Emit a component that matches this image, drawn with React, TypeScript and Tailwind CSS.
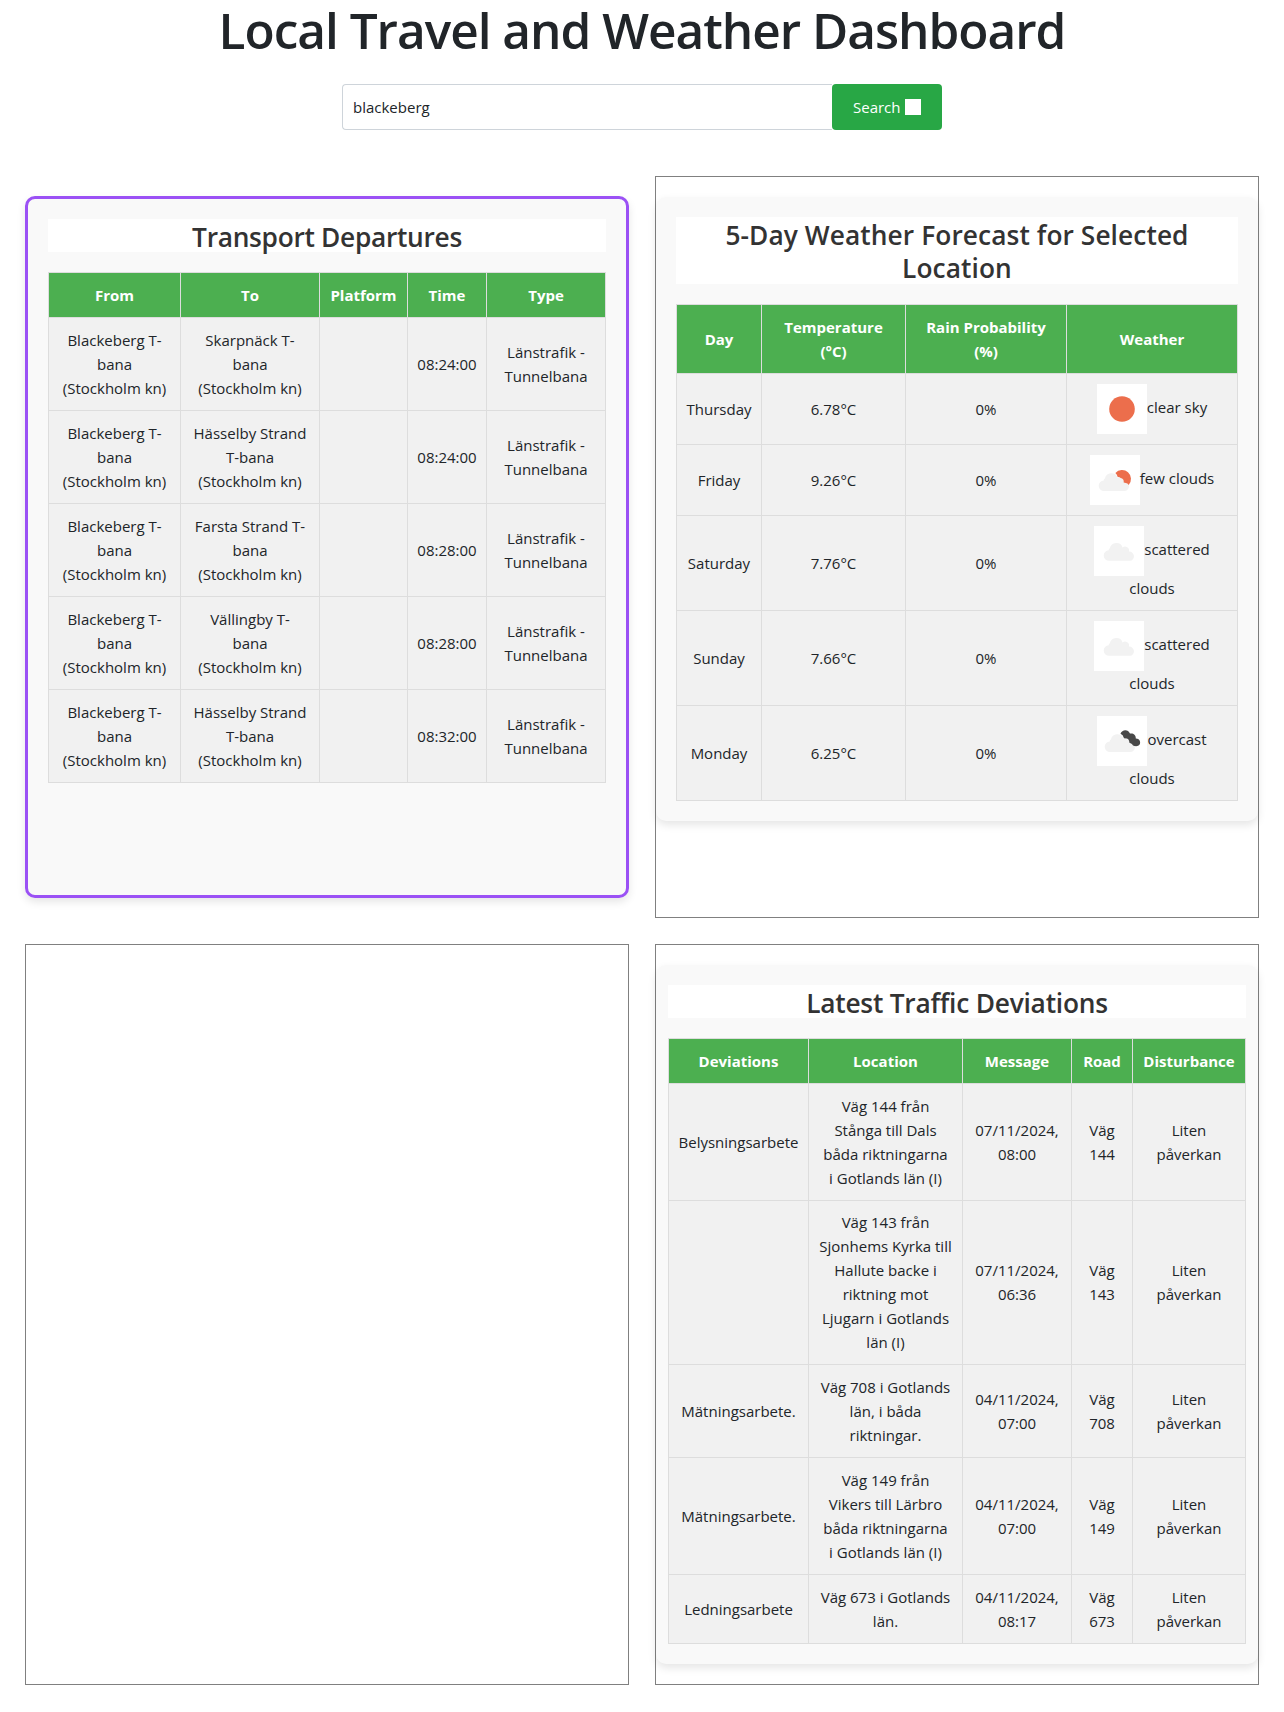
import React from "react";

type WeatherKind = "clear" | "few" | "scattered" | "overcast";
type Cell = string[];

const departures: Cell[][] = [
  [["Blackeberg T-", "bana", "(Stockholm kn)"], ["Skarpnäck T-", "bana", "(Stockholm kn)"], [], ["08:24:00"], ["Länstrafik -", "Tunnelbana"]],
  [["Blackeberg T-", "bana", "(Stockholm kn)"], ["Hässelby Strand", "T-bana", "(Stockholm kn)"], [], ["08:24:00"], ["Länstrafik -", "Tunnelbana"]],
  [["Blackeberg T-", "bana", "(Stockholm kn)"], ["Farsta Strand T-", "bana", "(Stockholm kn)"], [], ["08:28:00"], ["Länstrafik -", "Tunnelbana"]],
  [["Blackeberg T-", "bana", "(Stockholm kn)"], ["Vällingby T-", "bana", "(Stockholm kn)"], [], ["08:28:00"], ["Länstrafik -", "Tunnelbana"]],
  [["Blackeberg T-", "bana", "(Stockholm kn)"], ["Hässelby Strand", "T-bana", "(Stockholm kn)"], [], ["08:32:00"], ["Länstrafik -", "Tunnelbana"]],
];

const forecast: { day: string; temp: string; rain: string; kind: WeatherKind; label: string[] }[] = [
  { day: "Thursday", temp: "6.78°C", rain: "0%", kind: "clear", label: ["clear sky"] },
  { day: "Friday", temp: "9.26°C", rain: "0%", kind: "few", label: ["few clouds"] },
  { day: "Saturday", temp: "7.76°C", rain: "0%", kind: "scattered", label: ["scattered", "clouds"] },
  { day: "Sunday", temp: "7.66°C", rain: "0%", kind: "scattered", label: ["scattered", "clouds"] },
  { day: "Monday", temp: "6.25°C", rain: "0%", kind: "overcast", label: ["overcast", "clouds"] },
];

const deviations: { height: string; cells: Cell[]; pad?: string }[] = [
  { height: "h-[117px]", cells: [["Belysningsarbete"], ["Väg 144 från", "Stånga till Dals", "båda riktningarna", "i Gotlands län (I)"], ["07/11/2024,", "08:00"], ["Väg", "144"], ["Liten", "påverkan"]] },
  { height: "h-[164px]", pad: "pb-[2px]", cells: [[], ["Väg 143 från", "Sjonhems Kyrka till", "Hallute backe i", "riktning mot", "Ljugarn i Gotlands", "län (I)"], ["07/11/2024,", "06:36"], ["Väg", "143"], ["Liten", "påverkan"]] },
  { height: "h-[93px]", cells: [["Mätningsarbete."], ["Väg 708 i Gotlands", "län, i båda", "riktningar."], ["04/11/2024,", "07:00"], ["Väg", "708"], ["Liten", "påverkan"]] },
  { height: "h-[117px]", cells: [["Mätningsarbete."], ["Väg 149 från", "Vikers till Lärbro", "båda riktningarna", "i Gotlands län (I)"], ["04/11/2024,", "07:00"], ["Väg", "149"], ["Liten", "påverkan"]] },
  { height: "h-[69px]", cells: [["Ledningsarbete"], ["Väg 673 i Gotlands", "län."], ["04/11/2024,", "08:17"], ["Väg", "673"], ["Liten", "påverkan"]] },
];

const CLOUD =
  "M15.3 34.8a5.3 5.3 0 0 1-.6-10.6 2 2 0 0 1 1.2-1.9 6.6 6.6 0 0 1 12.7-.7 3.9 3.9 0 0 1 6.3 4 4.6 4.6 0 1 1 .9 9.2z";

function WeatherIcon({ kind }: { kind: WeatherKind }) {
  return (
    <svg viewBox="0 0 50 50" className="size-[50px] shrink-0 bg-white" aria-hidden="true">
      {kind === "clear" && <circle cx="25" cy="25" r="12.8" fill="#ec6e4c" />}
      {kind === "few" && (
        <>
          <path d={CLOUD} transform="translate(-1 1.2)" fill="#f2f2f2" />
          <path
            d="M25.4 18A8.7 8.7 0 0 1 38.7 29.9Q37.6 28 35.8 27.9L33.7 27.6Q34.2 23.4 30.6 22.9 29.6 21.8 27.7 22.1 27.1 19.6 25.4 18z"
            fill="#ec6e4c"
          />
        </>
      )}
      {kind === "scattered" && <path d={CLOUD} fill="#f2f2f2" />}
      {kind === "overcast" && (
        <>
          <path d={CLOUD} transform="translate(-2 1.2)" fill="#f2f2f2" />
          <path
            d="M23.5 17.8C25 13.2 31.2 12.8 33 17.6 35.8 16.8 38.9 18.6 38.8 22.4 42.2 22.2 44.2 25.8 42.6 28.6 41.2 30.8 38 30.4 36 29.6 35.2 28.2 34 27.2 32.4 26.8 32.4 24.8 31.6 22.8 29.8 22.4L27 22.2Q26 18.8 23.5 17.8z"
            fill="#484848"
          />
        </>
      )}
    </svg>
  );
}

function Lines({ text }: { text: string[] }) {
  return (
    <>
      {text.map((line, i) => (
        <span key={i} className="block whitespace-nowrap">
          {line}
        </span>
      ))}
    </>
  );
}

function Table({ cols, head, headHeight, children }: { cols: string[]; head: Cell[]; headHeight: string; children: React.ReactNode }) {
  return (
    <table className="mt-5 w-full table-fixed border-separate border-spacing-0 border-t border-l border-[#ddd] text-center">
      <colgroup>
        {cols.map((c, i) => (
          <col key={i} className={c} />
        ))}
      </colgroup>
      <thead>
        <tr className={headHeight}>
          {head.map((h, i) => (
            <th key={i} className="border-r border-b border-[#ddd] bg-[#4caf50] p-0 align-middle font-bold text-white">
              <Lines text={h} />
            </th>
          ))}
        </tr>
      </thead>
      <tbody>{children}</tbody>
    </table>
  );
}

function Td({ children, pad = "pb-0" }: { children?: React.ReactNode; pad?: string }) {
  return <td className={`border-r border-b border-[#ddd] bg-[#f1f1f1] px-0 pt-0 align-middle ${pad}`}>{children}</td>;
}

function CardTitle({ lines, height, tracking }: { lines: string[]; height: string; tracking: string }) {
  return (
    <h2 className={`bg-white pt-[2px] text-center text-[26.3px] leading-[33px] font-semibold text-[#333] ${height} ${tracking}`}>
      <Lines text={lines} />
    </h2>
  );
}

export default function App() {
  return (
    <main className="h-[1712px] w-[1284px] bg-white font-['Open_Sans','Noto_Sans',sans-serif] text-[15px] leading-6 text-[#212529]">
      <h1 className="h-[84px] text-center text-[49.5px] leading-[60px] font-semibold tracking-[-1px] whitespace-nowrap">
        Local Travel and Weather Dashboard
      </h1>

      <form className="ml-[342px] flex h-[46px] w-[600px]" onSubmit={(e) => e.preventDefault()}>
        <input
          className="min-w-0 flex-1 rounded-l-[4px] border border-r-0 border-[#ced4da] bg-white px-[10px] outline-none"
          defaultValue="blackeberg"
          aria-label="Location"
        />
        <button className="flex w-[110px] items-center rounded-[4px] bg-[#28a745] pl-[21px] text-white">
          <span className="w-[52px] text-left">Search</span>
          <span className="size-4 bg-white" />
        </button>
      </form>

      <div className="mt-[46px] grid grid-cols-[604px_604px] grid-rows-[742px_741px] gap-[26px] pl-[25px]">
        <section className="my-5 rounded-[10px] border-[3px] border-[#9b51f5] bg-[#f9f9f9] p-5 shadow-[0_4px_8px_rgba(0,0,0,0.1)]">
          <CardTitle lines={["Transport Departures"]} height="h-[33px]" tracking="tracking-[-0.3px]" />
          <Table
            cols={["w-[132px]", "w-[139px]", "w-[88px]", "w-[79px]", "w-[119px]"]}
            head={[["From"], ["To"], ["Platform"], ["Time"], ["Type"]]}
            headHeight="h-[45px]"
          >
            {departures.map((row, r) => (
              <tr key={r} className="h-[93px]">
                {row.map((cell, c) => (
                  <Td key={c}>
                    <Lines text={cell} />
                  </Td>
                ))}
              </tr>
            ))}
          </Table>
        </section>

        <section className="border border-[#808080] py-5">
          <div className="rounded-[10px] bg-[#f9f9f9] p-5 shadow-[0_4px_8px_rgba(0,0,0,0.1)]">
            <CardTitle lines={["5-Day Weather Forecast for Selected", "Location"]} height="h-[67px]" tracking="tracking-[0.08px]" />
            <Table
              cols={["w-[85px]", "w-[144px]", "w-[161px]", "w-[171px]"]}
              head={[["Day"], ["Temperature", "(°C)"], ["Rain Probability", "(%)"], ["Weather"]]}
              headHeight="h-[69px]"
            >
              {forecast.map((f) => (
                <tr key={f.day} className={f.label.length > 1 ? "h-[95px]" : "h-[71px]"}>
                  <Td>{f.day}</Td>
                  <Td>{f.temp}</Td>
                  <Td>{f.rain}</Td>
                  <Td>
                    <div className="flex items-center justify-center">
                      <WeatherIcon kind={f.kind} />
                      <span className="pb-1 whitespace-nowrap">{f.label[0]}</span>
                    </div>
                    {f.label[1] && <span className="block">{f.label[1]}</span>}
                  </Td>
                </tr>
              ))}
            </Table>
          </div>
        </section>

        <section className="border border-[#808080]" />

        <section className="border border-[#808080] py-5">
          <div className="rounded-[10px] bg-[#f9f9f9] px-3 py-5 shadow-[0_4px_8px_rgba(0,0,0,0.1)]">
            <CardTitle lines={["Latest Traffic Deviations"]} height="h-[33px]" tracking="tracking-[-0.22px]" />
            <Table
              cols={["w-[140px]", "w-[154px]", "w-[109px]", "w-[61px]", "w-[113px]"]}
              head={[["Deviations"], ["Location"], ["Message"], ["Road"], ["Disturbance"]]}
              headHeight="h-[45px]"
            >
              {deviations.map((row, r) => (
                <tr key={r} className={row.height}>
                  {row.cells.map((cell, c) => (
                    <Td key={c} pad={row.pad}>
                      <Lines text={cell} />
                    </Td>
                  ))}
                </tr>
              ))}
            </Table>
          </div>
        </section>
      </div>
    </main>
  );
}
